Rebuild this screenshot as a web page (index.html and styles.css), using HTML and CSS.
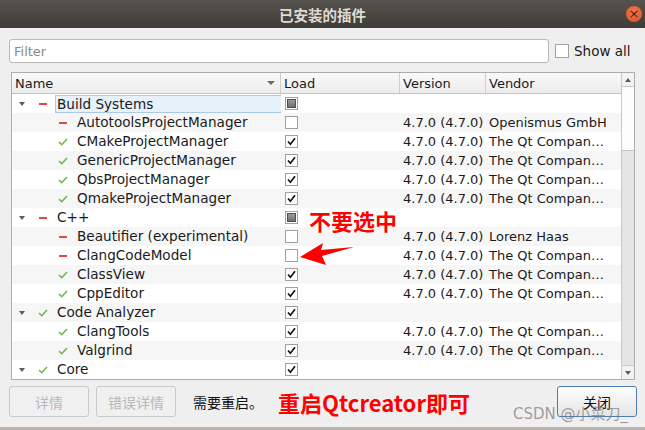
FILE: index.html
```html
<!DOCTYPE html>
<html lang="zh-CN">
<head>
    <meta charset="UTF-8">
    <title>已安装的插件</title>
    <link rel="stylesheet" href="styles.css">
</head>
<body>

<div class="window">
    <div class="titlebar">
        <span></span>
        <div class="title">已安装的插件</div>
        <div class="close-wrap"><span class="close-btn">×</span></div>
    </div>

    <div class="content">
        <div class="filter-row">
            <input class="filter" type="text" placeholder="Filter">
            <label class="show-all"><span class="box"></span>Show all</label>
        </div>

        <div class="tree">
            <div class="tree-main">
                <div class="row header">
                    <div class="cell name-h">Name<span class="sort"></span></div>
                    <div class="cell">Load</div>
                    <div class="cell">Version</div>
                    <div class="cell last">Vendor</div>
                </div>
                <div id="rows"></div>
            </div>
            <div class="scrollbar">
                <div class="sb-btn"><span class="tri up"></span></div>
                <div class="sb-thumb"></div>
                <div class="sb-track"></div>
                <div class="sb-btn"><span class="tri down"></span></div>
            </div>
        </div>

        <div class="bottom">
            <button class="btn" disabled>详情</button>
            <button class="btn" disabled>错误详情</button>
            <span class="restart">需要重启。</span>
            <span class="note big">重启Qtcreator即可</span>
            <span class="spacer"></span>
            <button class="btn primary">关闭</button>
        </div>
    </div>

    <!-- annotations drawn on top of the screenshot -->
    <div class="note tip">不要选中</div>
    <svg class="arrow" width="60" height="30" viewBox="296 240 60 30">
        <polygon points="300,257 323,243 321,250 354,247 322,256 326,265" fill="#ff0000"/>
    </svg>
    <div class="watermark">CSDN @小菜刀_</div>
</div>

<script>
    const plugins = [
        { name: 'Build Systems', group: true, state: 'off', load: 'part', selected: true },
        { name: 'AutotoolsProjectManager', state: 'off', load: 'no', vendor: 'Openismus GmbH' },
        { name: 'CMakeProjectManager', state: 'on', load: 'yes' },
        { name: 'GenericProjectManager', state: 'on', load: 'yes' },
        { name: 'QbsProjectManager', state: 'on', load: 'yes' },
        { name: 'QmakeProjectManager', state: 'on', load: 'yes' },
        { name: 'C++', group: true, state: 'off', load: 'part' },
        { name: 'Beautifier (experimental)', state: 'off', load: 'no', vendor: 'Lorenz Haas' },
        { name: 'ClangCodeModel', state: 'off', load: 'no' },
        { name: 'ClassView', state: 'on', load: 'yes' },
        { name: 'CppEditor', state: 'on', load: 'yes' },
        { name: 'Code Analyzer', group: true, state: 'on', load: 'yes' },
        { name: 'ClangTools', state: 'on', load: 'yes' },
        { name: 'Valgrind', state: 'on', load: 'yes' },
        { name: 'Core', group: true, state: 'on', load: 'yes' },
    ];

    const check = '<svg width="11" height="11" viewBox="0 0 11 11"><path d="M2 5.5 L4.4 8.2 L9 2.2" fill="none" stroke="#111" stroke-width="1.7"/></svg>';
    const tick = '<svg width="10" height="8" viewBox="0 0 10 8"><path d="M1 4.2 L3.8 6.6 L9 1" fill="none" stroke="#77b655" stroke-width="1.6"/></svg>';

    const rows = document.getElementById('rows');
    plugins.forEach(function (p, i) {
        let box = '<span class="cb"></span>';
        if (p.load === 'yes') box = '<span class="cb">' + check + '</span>';
        if (p.load === 'part') box = '<span class="cb"><span class="partial"></span></span>';

        const icon = p.state === 'on' ? tick : '<span class="minus"></span>';
        const version = p.group ? '' : '4.7.0 (4.7.0)';
        const vendor = p.group ? '' : (p.vendor || 'The Qt Compan…');

        rows.innerHTML += `
            <div class="row${i % 2 ? ' alt' : ''}">
                <div class="cell name${p.group ? '' : ' child'}">
                    <span class="expander">${p.group ? '<span class="tri down"></span>' : ''}</span>
                    <span class="status">${icon}</span>
                    <span class="label${p.selected ? ' selected' : ''}">${p.name}</span>
                </div>
                <div class="cell load">${box}</div>
                <div class="cell">${version}</div>
                <div class="cell">${vendor}</div>
            </div>`;
    });
</script>

</body>
</html>
```

FILE: styles.css
```css
body {
    margin: 0;
    background-color: #b9b5ae;
    font-family: "DejaVu Sans", "Noto Sans CJK SC", sans-serif;
    font-size: 13px;
    color: #1a1a1a;
}
.window {
    position: relative;
    width: 645px;
    height: 427px;
    background-color: #efefef;
    overflow: hidden;
}
.titlebar {
    height: 28px;
    display: grid;
    grid-template-columns: 1fr auto 1fr;
    align-items: center;
    background: linear-gradient(#57544f, #3d3c38);
}
.title {
    font-family: "Noto Sans CJK SC", sans-serif;
    font-size: 14.5px;
    font-weight: bold;
    color: #dfdbd2;
}
.close-wrap {
    display: flex;
    justify-content: flex-end;
    padding-right: 3px;
}
.close-btn {
    width: 16px;
    height: 16px;
    border-radius: 50%;
    background: radial-gradient(circle at 50% 35%, #f3764a, #d9502a);
    color: #4a2213;
    font-size: 13px;
    line-height: 15px;
    text-align: center;
    font-family: "DejaVu Sans", sans-serif;
}
.content {
    padding: 11px 8px 0 9px;
}
.filter-row {
    display: flex;
    align-items: center;
    height: 24px;
}
.filter {
    width: 540px;
    height: 24px;
    box-sizing: border-box;
    border: 1px solid #b9b9b9;
    border-radius: 3px;
    padding: 0 4px;
    font-family: "DejaVu Sans", sans-serif;
    font-size: 13px;
    background: #fff;
    outline: none;
}
.filter::placeholder {
    color: #8a8a8a;
}
.show-all {
    display: flex;
    align-items: center;
    margin-left: 6px;
    font-size: 13.5px;
}
.show-all .box {
    width: 12px;
    height: 12px;
    border: 1px solid #a3a3a3;
    background: #fff;
    margin-right: 5px;
}
.tree {
    margin: 9px 2px 0 2px;
    height: 308px;
    box-sizing: border-box;
    border: 1px solid #adadad;
    background: #fff;
    display: grid;
    grid-template-columns: 609px 13px;
}
.row {
    display: grid;
    grid-template-columns: 269px 119px 86px 135px;
    height: 19px;
    align-items: center;
}
.row.alt {
    background-color: #f6f6f6;
}
.cell {
    padding-left: 3px;
    white-space: nowrap;
    overflow: hidden;
    height: 19px;
    line-height: 19px;
}
.header {
    height: 21px;
    background: linear-gradient(#fafafa, #ececec);
    border-bottom: 1px solid #c4c4c4;
    box-sizing: border-box;
}
.header .cell {
    border-right: 1px solid #cfcfcf;
    height: 20px;
    line-height: 21px;
    box-sizing: border-box;
    position: relative;
}
.header .cell.last {
    border-right: none;
}
.name-h .sort {
    position: absolute;
    right: 5px;
    top: 8px;
    border-left: 4px solid transparent;
    border-right: 4px solid transparent;
    border-top: 4px solid #6a6a6a;
}
.cell.name {
    padding-left: 0;
    display: flex;
    align-items: center;
    font-size: 13.6px;
}
.cell.name.child {
    padding-left: 20px;
}
.expander {
    width: 20px;
    display: flex;
    justify-content: center;
}
.tri {
    width: 0;
    height: 0;
    border-left: 3.5px solid transparent;
    border-right: 3.5px solid transparent;
}
.tri.down {
    border-top: 4px solid #5c5c5c;
}
.tri.up {
    border-bottom: 4px solid #5c5c5c;
}
.status {
    width: 22px;
    height: 19px;
    display: flex;
    align-items: center;
    justify-content: center;
}
.minus {
    width: 8px;
    height: 2px;
    background: #e04a4a;
}
.label {
    margin-left: 3px;
    flex: 1;
}
.label.selected {
    margin-left: 1px;
    padding-left: 1px;
    height: 16px;
    line-height: 16px;
    background: #e6f1fa;
    border: 1px solid #a9cbe9;
    border-right: none;
}
.cell.load {
    padding-left: 4px;
    display: flex;
    align-items: center;
}
.cb {
    width: 11px;
    height: 11px;
    border: 1px solid #a0a0a0;
    background: #fff;
    display: flex;
    align-items: center;
    justify-content: center;
}
.partial {
    width: 7px;
    height: 7px;
    border: 1px solid #4f4f4f;
    background: linear-gradient(#9a9a9a, #6d6d6d);
}
.scrollbar {
    border-left: 1px solid #c8c8c8;
    display: flex;
    flex-direction: column;
    background: #f3f3f3;
}
.sb-btn {
    height: 13px;
    display: flex;
    align-items: center;
    justify-content: center;
}
.sb-thumb {
    height: 63px;
    background: #fcfcfc;
    border-top: 1px solid #c6c6c6;
    border-bottom: 1px solid #c6c6c6;
}
.sb-track {
    flex: 1;
    background: #e4e4e4;
    border-bottom: 1px solid #cacaca;
}
.bottom {
    display: flex;
    align-items: center;
    margin-top: 6px;
    height: 31px;
}
.btn {
    height: 31px;
    width: 80px;
    border: 1px solid #c9c9c9;
    border-radius: 3px;
    background: #f0f0f0;
    color: #b8b8b8;
    font-family: "Noto Sans CJK SC", sans-serif;
    font-size: 14px;
    margin-right: 7px;
    padding: 0;
}
.btn.primary {
    margin-right: 0;
    border-color: #4d7db0;
    background: linear-gradient(#fdfdfd, #e6e6e6);
    color: #111;
}
.restart {
    margin-left: 10px;
    font-family: "Noto Sans CJK SC", sans-serif;
    font-size: 14px;
    color: #111;
}
.note {
    font-family: "Noto Sans CJK SC", sans-serif;
    font-weight: bold;
    color: #ff0000;
}
.note.big {
    margin-left: 15px;
    font-size: 22px;
}
.spacer {
    flex: 1;
}
.tip {
    position: absolute;
    left: 309px;
    top: 205px;
    font-size: 22px;
    line-height: 30px;
}
.arrow {
    position: absolute;
    left: 296px;
    top: 240px;
}
.watermark {
    position: absolute;
    left: 513px;
    top: 402px;
    font-family: "DejaVu Sans", "Noto Sans CJK SC", sans-serif;
    font-size: 15px;
    color: rgba(120, 120, 120, 0.7);
}
```
